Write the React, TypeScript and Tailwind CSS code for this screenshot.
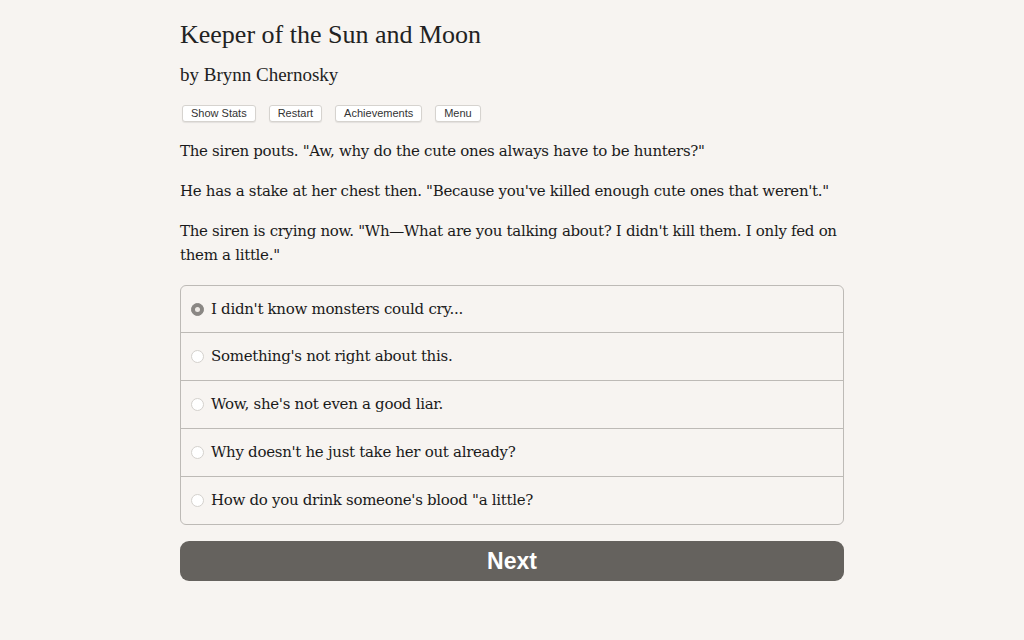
import { useState } from "react";

const choices = [
  "I didn't know monsters could cry...",
  "Something's not right about this.",
  "Wow, she's not even a good liar.",
  "Why doesn't he just take her out already?",
  "How do you drink someone's blood \"a little?",
];

const serif = { fontFamily: '"DejaVu Serif", "Liberation Serif", serif' };
const titleFont = { fontFamily: '"Liberation Serif", "DejaVu Serif", serif' };
const sans = { fontFamily: '"Liberation Sans", Arial, sans-serif' };

export default function App() {
  const [selected, setSelected] = useState(0);

  return (
    <div className="min-h-screen w-full bg-[#f7f4f1] text-[#1a1a1a]" style={serif}>
      <div className="mx-auto w-[664px] pt-[19px]">
        <h1 className="text-[26px] leading-[32px] text-[#222]" style={titleFont}>
          Keeper of the Sun and Moon
        </h1>
        <h2 className="mt-[12px] text-[19px] leading-[24px] text-[#222]" style={titleFont}>
          by Brynn Chernosky
        </h2>

        <div className="mt-[18px] flex gap-[13px] pl-[2px]" style={sans}>
          {["Show Stats", "Restart", "Achievements", "Menu"].map((label) => (
            <button
              key={label}
              className="h-[17px] rounded-[3px] border border-[#d6d3cf] bg-white px-[8px] text-[11px] leading-[15px] text-[#333] shadow-[0_1px_1px_rgba(0,0,0,0.08)]"
            >
              {label}
            </button>
          ))}
        </div>

        <div className="mt-[17px] space-y-[16px] text-[15px] leading-[24px] tracking-[-0.3px]">
          <p>The siren pouts. "Aw, why do the cute ones always have to be hunters?"</p>
          <p>He has a stake at her chest then. "Because you've killed enough cute ones that weren't."</p>
          <p>
            The siren is crying now. "Wh—What are you talking about? I didn't kill them. I only fed on them a little."
          </p>
        </div>

        <div className="mt-[18px] overflow-hidden rounded-[6px] border border-[#bdbab6]">
          {choices.map((text, i) => (
            <label
              key={text}
              onClick={() => setSelected(i)}
              className={`flex cursor-pointer items-center gap-[7px] pl-[10px] text-[15px] tracking-[-0.3px] ${
                i > 0 ? "h-[48px] border-t border-[#bdbab6]" : "h-[46px]"
              }`}
            >
              <span
                className={`flex h-[13px] w-[13px] items-center justify-center rounded-full border ${
                  selected === i ? "border-[#8a8784] bg-[#8a8784]" : "border-[#d4d1cd] bg-white"
                }`}
              >
                {selected === i && <span className="h-[5px] w-[5px] rounded-full bg-[#eeeae6]" />}
              </span>
              <span>{text}</span>
            </label>
          ))}
        </div>

        <button
          className="mt-[16px] flex h-[40px] w-full items-center justify-center rounded-[9px] bg-[#65625e] text-[23px] font-bold text-white"
          style={sans}
        >
          Next
        </button>
      </div>
    </div>
  );
}
